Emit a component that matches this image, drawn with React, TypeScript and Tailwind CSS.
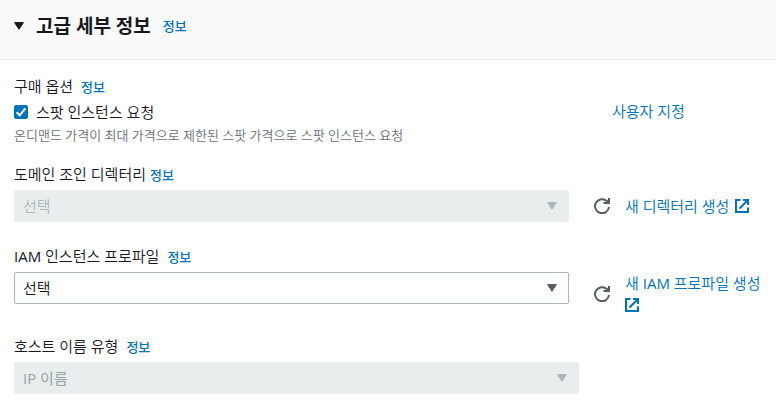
import React from 'react';

const InfoLink: React.FC<{ className?: string }> = ({ className = 'ml-2' }) => (
  <a href="#info" className={`${className} text-[13px] font-medium text-[#0073bb] hover:underline`}>정보</a>
);

const Caret = () => (
  <svg viewBox="0 0 10 8" className="h-2 w-2.5" fill="currentColor" stroke="currentColor" strokeLinejoin="round" aria-hidden="true">
    <path d="M.6 .6h8.8L5 7.3z" />
  </svg>
);

const RefreshIcon = () => (
  <svg viewBox="0 0 16 16" className="size-4" fill="none" stroke="currentColor" strokeWidth="2" aria-hidden="true">
    <path d="M15 9A7 7 0 1 1 12.9 3.1L14 4.2" />
    <path d="M9.5 5H15V0" />
    <path d="M11 5l4-4v4z" fill="currentColor" stroke="none" />
  </svg>
);

const ExternalIcon = () => (
  <svg viewBox="0 0 14 14" className="h-[22px] w-3.5" fill="none" stroke="currentColor" strokeWidth="2" aria-hidden="true">
    <path d="M5.5 1H1v12h12V8.5" />
    <path d="M8 1h5v5M13 1L4.5 9.5" />
  </svg>
);

interface SelectBoxProps {
  id: string;
  value: string;
  disabled?: boolean;
  muted?: boolean;
}

const SelectBox: React.FC<SelectBoxProps> = ({ id, value, disabled, muted }) => (
  <div className="relative">
    <select
      id={id}
      disabled={disabled}
      className={`block h-8 w-full appearance-none rounded-xs border pl-2 pr-8 text-[15px] opacity-100 ${
        disabled ? 'border-[#eaeded] bg-[#eaeded]' : 'border-[#aab7b8] bg-white text-[#16191f]'
      } ${disabled ? (muted ? 'text-[#aab7b8]' : 'font-normal text-[#95a5a6]') : ''}`}
    >
      <option>{value}</option>
    </select>
    <span className={`pointer-events-none absolute inset-y-0 right-3 flex items-center ${disabled ? 'text-[#aab7b8]' : 'text-[#545b64]'}`}>
      <Caret />
    </span>
  </div>
);

const CreateLink: React.FC<{ label: string; children: React.ReactNode }> = ({ label, children }) => (
  <div className="flex w-[168px] shrink-0 items-center gap-[15px]">
    <button type="button" aria-label={label} className="shrink-0 text-[#545b64]">
      <RefreshIcon />
    </button>
    <a href="#create" className="flex flex-wrap gap-x-1.5 leading-[22px] text-[#0073bb] hover:underline">
      <span>{children}</span>
      <ExternalIcon />
    </a>
  </div>
);

export default function App() {
  return (
    <section className="bg-white font-['Open_Sans','Noto_Sans_CJK_KR',sans-serif] text-[15px] leading-5 font-[350] text-[#16191f]">
      <header className="flex h-[60px] items-center border-b border-[#eaeded] bg-[#fafafa] px-3.5 pb-2">
        <button type="button" className="flex items-center gap-3">
          <Caret />
          <h2 className="text-[19px] font-bold leading-7">고급 세부 정보</h2>
        </button>
        <InfoLink className="ml-3" />
      </header>

      <div className="px-3.5 pt-4">
        <div className="flex items-center">
          <div className="flex-1">
            <div className="flex h-5 items-baseline">
              <span>구매 옵션</span>
              <InfoLink />
            </div>
            <label className="mt-1.5 flex items-center gap-2">
              <span className="relative flex">
                <input type="checkbox" defaultChecked className="peer size-3.5 appearance-none rounded-xs border border-[#aab7b8] checked:border-[#0073bb] checked:bg-[#0073bb]" />
                <svg viewBox="0 0 14 14" className="pointer-events-none absolute inset-0 hidden size-3.5 peer-checked:block" fill="none" stroke="#fff" strokeWidth="2" aria-hidden="true">
                  <path d="M2.6 7.2l3.2 3L11.4 3.4" />
                </svg>
              </span>
              스팟 인스턴스 요청
            </label>
            <p className="mt-[3px] text-[13px] text-[#687078]">온디맨드 가격이 최대 가격으로 제한된 스팟 가격으로 스팟 인스턴스 요청</p>
          </div>
          <a href="#customize" className="w-[150px] text-[#0073bb] hover:underline">사용자 지정</a>
        </div>

        <div className="mt-[19px]">
          <div className="flex h-5 items-baseline">
            <label htmlFor="directory">도메인 조인 디렉터리</label>
            <InfoLink className="ml-1" />
          </div>
          <div className="mt-1.5 flex gap-[25px]">
            <div className="flex-1">
              <SelectBox id="directory" value="선택" disabled muted />
            </div>
            <CreateLink label="디렉터리 새로 고침">새 디렉터리 생성</CreateLink>
          </div>
        </div>

        <div className="mt-6">
          <div className="flex h-5 items-baseline">
            <label htmlFor="profile"><span className="font-normal">IAM</span> 인스턴스 프로파일</label>
            <InfoLink />
          </div>
          <div className="mt-1.5 flex gap-[25px]">
            <div className="flex-1">
              <SelectBox id="profile" value="선택" />
            </div>
            <CreateLink label="프로파일 새로 고침">새 <span className="font-normal">IAM</span> 프로파일 생성</CreateLink>
          </div>
        </div>

        <div className="mt-5">
          <div className="flex h-5 items-baseline">
            <label htmlFor="hostname">호스트 이름 유형</label>
            <InfoLink />
          </div>
          <div className="mt-1.5 mr-[183px]">
            <SelectBox id="hostname" value="IP 이름" disabled />
          </div>
        </div>
      </div>
    </section>
  );
}
